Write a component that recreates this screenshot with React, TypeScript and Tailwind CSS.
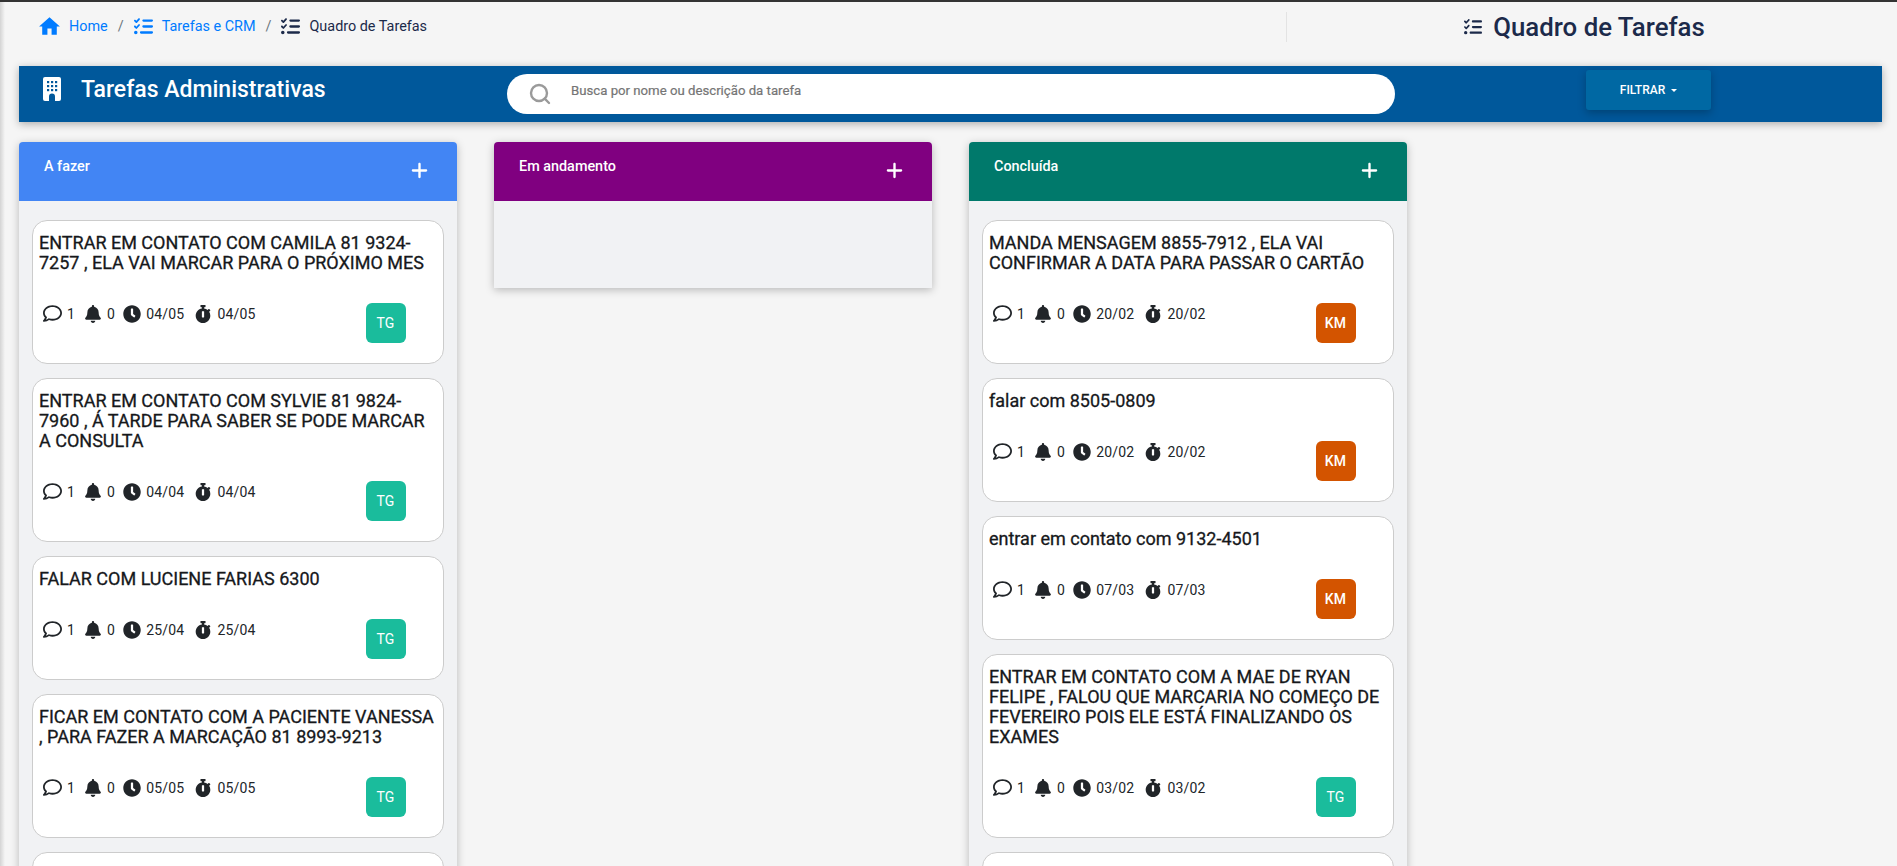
import { FaBell, FaClock, FaRegComment, FaStopwatch } from 'react-icons/fa'
import { FaListCheck, FaPlus } from 'react-icons/fa6'
import { LuSearch } from 'react-icons/lu'
import { MdHome } from 'react-icons/md'

type Task = { title: string; due: string; owner: 'TG' | 'KM' }

const todo: Task[] = [
  { title: 'ENTRAR EM CONTATO COM CAMILA 81 9324-7257 , ELA VAI MARCAR PARA O PRÓXIMO MES', due: '04/05', owner: 'TG' },
  { title: 'ENTRAR EM CONTATO COM SYLVIE 81 9824-7960 , Á TARDE PARA SABER SE PODE MARCAR A CONSULTA', due: '04/04', owner: 'TG' },
  { title: 'FALAR COM LUCIENE FARIAS 6300', due: '25/04', owner: 'TG' },
  { title: 'FICAR EM CONTATO COM A PACIENTE VANESSA , PARA FAZER A MARCAÇÃO 81 8993-9213', due: '05/05', owner: 'TG' },
]

const done: Task[] = [
  { title: 'MANDA MENSAGEM 8855-7912 , ELA VAI CONFIRMAR A DATA PARA PASSAR O CARTÃO', due: '20/02', owner: 'KM' },
  { title: 'falar com 8505-0809', due: '20/02', owner: 'KM' },
  { title: 'entrar em contato com 9132-4501', due: '07/03', owner: 'KM' },
  { title: 'ENTRAR EM CONTATO COM A MAE DE RYAN FELIPE , FALOU QUE MARCARIA NO COMEÇO DE FEVEREIRO POIS ELE ESTÁ FINALIZANDO OS EXAMES', due: '03/02', owner: 'TG' },
]

function BuildingIcon() {
  return (
    <svg viewBox="0 0 18 24" className="mt-[11px] ml-[5px] h-[24px] w-[18px]">
      <rect width="18" height="24" rx="2" fill="#ffffff" />
      <g fill="#00589b">
        <rect x="4" y="4" width="2.2" height="2.2" />
        <rect x="8" y="4" width="2.2" height="2.2" />
        <rect x="12" y="4" width="2.2" height="2.2" />
        <rect x="4" y="8" width="2.2" height="2.2" />
        <rect x="8" y="8" width="2.2" height="2.2" />
        <rect x="12" y="8" width="2.2" height="2.2" />
        <rect x="4" y="12" width="2.2" height="2.2" />
        <rect x="8" y="12" width="2.2" height="2.2" />
        <rect x="12" y="12" width="2.2" height="2.2" />
        <path d="M6 24v-4.5a3 3 0 0 1 6 0V24z" />
      </g>
    </svg>
  )
}

function TaskCard({ task }: { task: Task }) {
  return (
    <div className="rounded-[15px] border border-[#cccccc] bg-white pt-[12px] pr-[6px] pb-[20px] pl-[6px]">
      <h3 className="text-[18px] leading-[20px] font-normal text-[#16181b] [-webkit-text-stroke:0.3px_#16181b]">{task.title}</h3>
      <div className="mt-[30px] flex h-[40px] items-start text-[14px] leading-[14px] tracking-[0.2px] text-[#212529]">
        <div className="mt-[1px] ml-[4px] flex w-[322.5px] items-center">
          <FaRegComment className="mr-[5px] size-[19px]" />
          <span className="mr-[9px]">1</span>
          <FaBell className="mr-[5px] size-[18px]" />
          <span className="mr-[8px]">0</span>
          <FaClock className="mr-[5px] size-[18px]" />
          <span className="mr-[10px]">{task.due}</span>
          <FaStopwatch className="mr-[5px] size-[18px]" />
          <span>{task.due}</span>
        </div>
        <div
          className={
            task.owner === 'TG'
              ? 'flex size-[40px] items-center justify-center rounded-[6px] bg-[#1abc9c] text-[14px] text-white'
              : 'flex size-[40px] items-center justify-center rounded-[6px] bg-[#d35400] text-[14px] font-medium text-white'
          }
        >
          {task.owner}
        </div>
      </div>
    </div>
  )
}

function Column({ title, headerClass, tasks }: { title: string; headerClass: string; tasks: Task[] }) {
  return (
    <section className="w-[438px] shrink-0 self-start rounded-t-[4px] bg-[#f1f2f4] shadow-[0_2px_8px_rgba(0,0,0,0.25)]">
      <header className={`flex h-[59px] justify-between rounded-t-[4px] pt-[15px] pr-[28px] pl-[25px] ${headerClass}`}>
        <span className="text-[14.4px] leading-[20px] font-medium text-white">{title}</span>
        <FaPlus className="mt-[4px] size-[19px] text-white" />
      </header>
      <div className="flex min-h-[87px] flex-col gap-[14px] px-[13px] pt-[19px] pb-[14px]">
        {tasks.map((task, i) => (
          <TaskCard key={i} task={task} />
        ))}
        {tasks.length > 0 && <div className="h-[60px] rounded-t-[15px] border border-[#cccccc] bg-white" />}
      </div>
    </section>
  )
}

export default function App() {
  return (
    <div className="relative h-screen overflow-hidden border-t-2 border-[#333333] bg-[#f5f5f5] font-['Roboto',sans-serif]">
      <div className="absolute inset-y-0 left-0 w-[5px] bg-gradient-to-r from-[#d4d4d4] to-[#f5f5f5]" />

      <div className="flex h-[64px] items-start pr-[15px] pl-[19px]">
        <nav className="flex w-[1267px] items-center pt-[12px] pl-[18px] text-[14.4px] leading-[20px]">
          <MdHome className="mr-[7px] size-[25px] text-[#007bff]" />
          <a className="text-[#007bff]">Home</a>
          <span className="mx-[10px] text-[#6c757d]">/</span>
          <FaListCheck className="mr-[9px] size-[19px] text-[#007bff]" />
          <a className="text-[#007bff]">Tarefas e CRM</a>
          <span className="mx-[10px] text-[#6c757d]">/</span>
          <FaListCheck className="mr-[9px] size-[19px] text-[#1c2a4a]" />
          <span className="text-[#1c2a4a]">Quadro de Tarefas</span>
        </nav>
        <div className="mt-[10px] flex h-[30px] flex-1 items-center justify-center gap-[11px] border-l border-[#e3e3e3] text-[#1c2a4a]">
          <FaListCheck className="size-[18px]" />
          <h1 className="text-[25.8px] leading-[30px] font-medium">Quadro de Tarefas</h1>
        </div>
      </div>

      <div className="mx-[15px] ml-[19px] flex h-[56px] bg-[#00589b] pl-[19px] shadow-[0_2px_8px_rgba(0,0,0,0.3)]">
        <BuildingIcon />
        <h2 className="mt-[9px] ml-[20px] w-[426px] text-[23px] leading-[30px] font-medium text-white">Tarefas Administrativas</h2>
        <div className="mt-[8px] flex h-[40px] w-[888px] items-center rounded-full bg-white pl-[21px]">
          <LuSearch className="size-[24px] text-[#9a9a9a]" strokeWidth={2.4} />
          <span className="ml-[19px] -translate-y-[3px] text-[13.2px] text-[#757575] [-webkit-text-stroke:0.2px_#757575]">Busca por nome ou descrição da tarefa</span>
        </div>
        <button className="mt-[4px] ml-[191px] flex h-[40px] w-[125px] items-center justify-center gap-[6px] rounded-[3px] bg-[#0068a3] text-[12px] font-medium text-white shadow-[0_3px_8px_rgba(0,0,0,0.25)]">
          FILTRAR
          <span className="border-x-[3px] border-t-[3px] border-x-transparent border-t-white" />
        </button>
      </div>

      <main className="mt-[20px] ml-[19px] flex gap-[37px]">
        <Column title="A fazer" headerClass="bg-[#4285f4]" tasks={todo} />
        <Column title="Em andamento" headerClass="bg-[#800080]" tasks={[]} />
        <Column title="Concluída" headerClass="bg-[#00796b]" tasks={done} />
      </main>
    </div>
  )
}
